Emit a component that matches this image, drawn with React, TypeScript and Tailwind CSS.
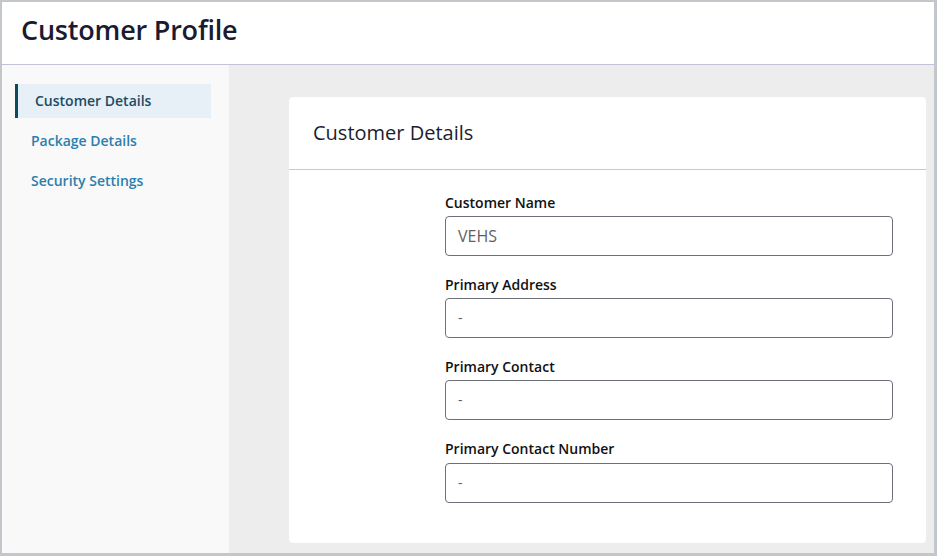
const NAV_ITEMS = ['Customer Details', 'Package Details', 'Security Settings'];

const FIELDS = [
  { label: 'Customer Name', value: 'VEHS', big: true },
  { label: 'Primary Address', value: '-', big: false },
  { label: 'Primary Contact', value: '-', big: false },
  { label: 'Primary Contact Number', value: '-', big: false },
];

export default function App() {
  return (
    <div
      className="w-[937px] h-[556px] flex flex-col border-t-2 border-l-2 border-r-[3px] border-b-[3px] border-[#c3c7cb] bg-white overflow-hidden"
      style={{ fontFamily: '"Open Sans", "Noto Sans", sans-serif' }}
    >
      <header className="h-[63px] shrink-0 flex items-center pl-[19px] pb-[6px] border-b border-[#c2c2d8] bg-white">
        <h1 className="text-[27px] font-semibold text-[#1a1b32] tracking-[-0.2px]">Customer Profile</h1>
      </header>
      <div className="flex flex-1 min-h-0">
        <nav className="w-[227px] shrink-0 bg-[#f9f9f9] pt-[19px] pl-[13px] pr-[18px] flex flex-col gap-[6px]">
          {NAV_ITEMS.map((item, i) =>
            i === 0 ? (
              <div
                key={item}
                className="h-[34px] flex items-center pl-[17px] border-l-[3px] border-[#0e4a5e] bg-[#e7f0f7] text-sm font-semibold text-[#1d4b63]"
              >
                {item}
              </div>
            ) : (
              <div key={item} className="h-[34px] flex items-center pl-4 text-sm font-semibold text-[#2b7fae]">
                {item}
              </div>
            )
          )}
        </nav>
        <main className="flex-1 bg-[#ededed] pt-8 pl-[60px] pr-2 pb-[10px]">
          <section className="h-full bg-white rounded-[4px]">
            <div className="h-[73px] flex items-center px-6 border-b border-[#c8c8d2]">
              <h2 className="text-[20px] text-[#1c1d30]">Customer Details</h2>
            </div>
            <div className="pt-[23px] pl-[156px] pr-[33px]">
              {FIELDS.map((f, i) => (
                <div key={f.label} className={i === 2 ? 'mb-5' : 'mb-[19px]'}>
                  <label className={`block h-5 leading-5 text-sm font-semibold text-[#111] ${i === 3 ? 'mb-1' : 'mb-[3px]'} ${i === 3 ? '-mt-px' : ''}`}>
                    {f.label}
                  </label>
                  <div
                    className={`h-10 flex items-center px-3 border border-[#6b7079] rounded-[4px] text-[#5f5f5f] ${
                      f.big ? 'text-base' : 'text-sm'
                    }`}
                  >
                    {f.value}
                  </div>
                </div>
              ))}
            </div>
          </section>
        </main>
      </div>
    </div>
  );
}
